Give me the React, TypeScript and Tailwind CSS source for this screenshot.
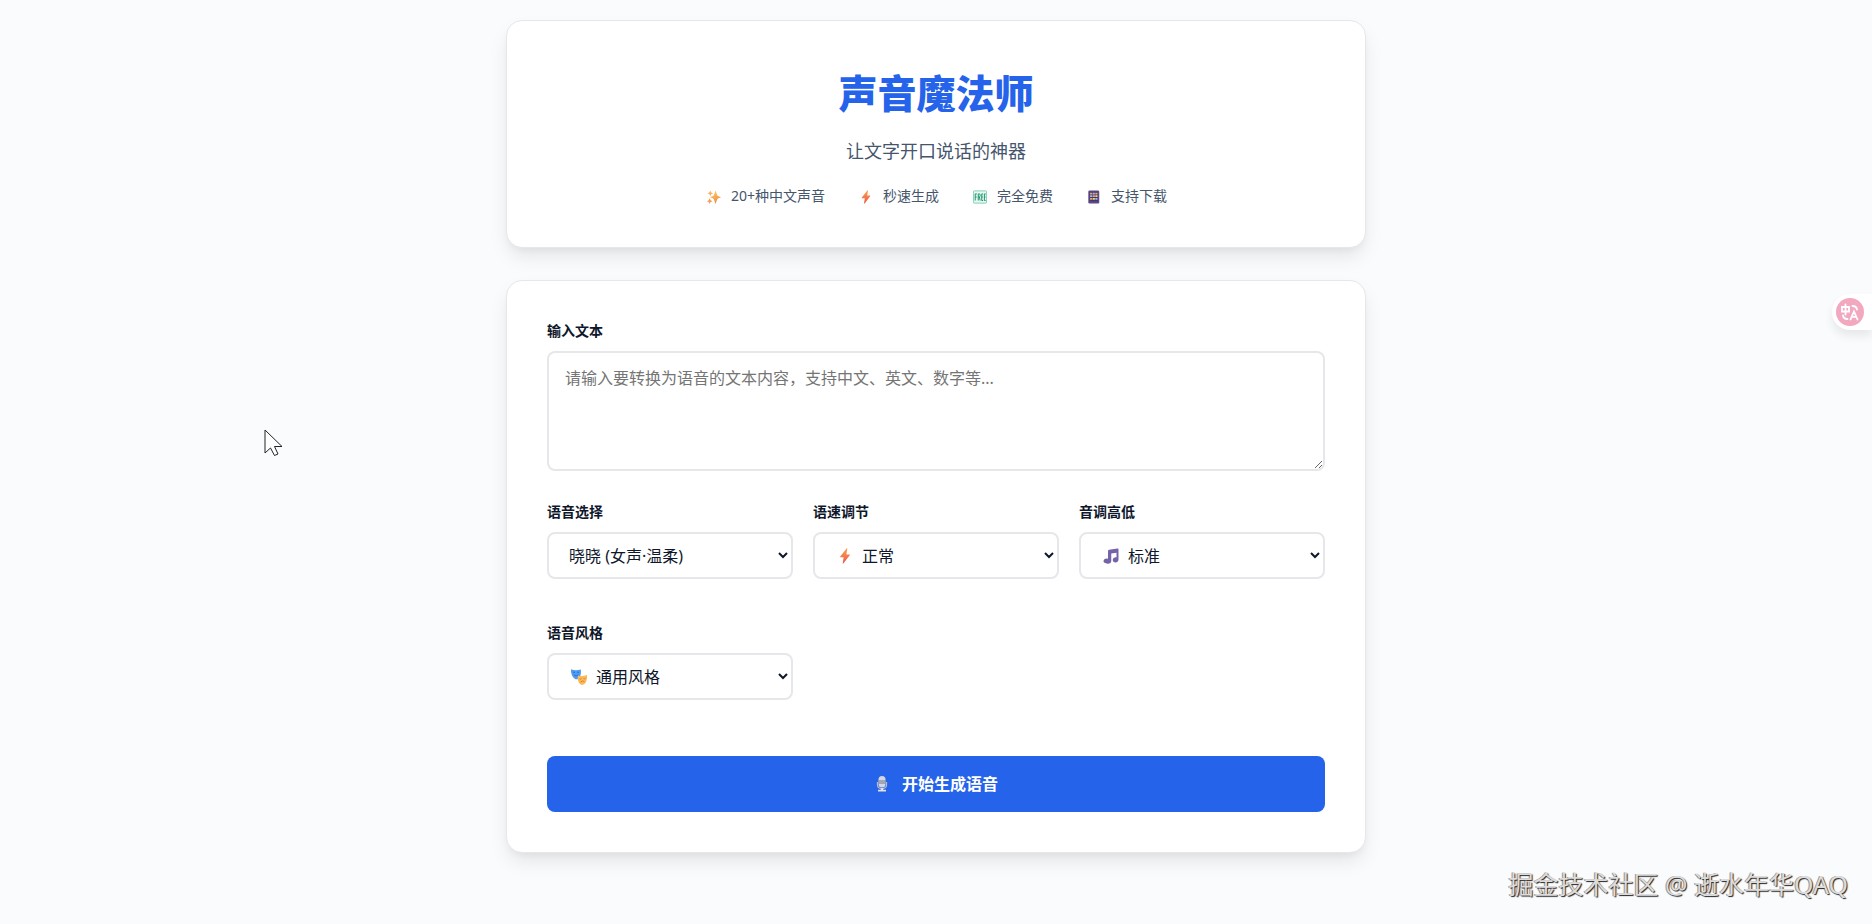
import { useState, type ReactNode } from 'react';
import clsx from 'clsx';

interface IconProps {
  className?: string;
}

function SparklesIcon({ className }: IconProps) {
  return (
    <svg viewBox="0 0 32 32" className={className} aria-hidden="true">
      <defs>
        <linearGradient id="sparkle" x1="0" y1="0" x2="0.3" y2="1">
          <stop offset="0" stopColor="#fbd765" />
          <stop offset="1" stopColor="#f08a45" />
        </linearGradient>
      </defs>
      <path
        fill="url(#sparkle)"
        d="M19.5 1 23 11Q23.6 13 25 13.6L32 16.500 25 19.400Q23.600 20 23 22L19.500 32 16 22Q15.400 20 14 19.400L7 16.500 14 13.600Q15.400 13 16 11Z"
      />
      <path fill="#f7b06a" d="M7.500 1 9.500 5.500l4.500 2L9.500 9.500 7.500 14 5.500 9.500 1 7.500 5.500 5.500Z" />
      <path fill="#f29a55" d="M6 18.500 8 23.500 13 25.500 8 27.500 6 32 4 27.500 0 25.500 4 23.500Z" />
    </svg>
  );
}

function BoltIcon({ className }: IconProps) {
  return (
    <svg viewBox="0 0 32 32" className={className} aria-hidden="true">
      <defs>
        <linearGradient id="bolt" x1="0" y1="0" x2="0" y2="1">
          <stop offset="0" stopColor="#fba24c" />
          <stop offset="1" stopColor="#ee5548" />
        </linearGradient>
      </defs>
      <path fill="url(#bolt)" d="M19 1 6.500 17c-.6.9-.2 1.700.8 1.700h6L11.500 30c-.2 1.200.8 1.500 1.500.6L25.500 14.500c.6-.9.200-1.700-.8-1.700h-6L20.500 1.800C20.700.4 19.700 0 19 1Z" />
    </svg>
  );
}

function FreeIcon({ className }: IconProps) {
  return (
    <svg viewBox="0 0 32 32" className={className} aria-hidden="true">
      <rect x="1" y="2" width="30" height="28" rx="1.500" fill="#e3f8ef" stroke="#7cc9ae" strokeWidth="2" />
      <path
        fill="none"
        stroke="#16936b"
        strokeWidth="2.200"
        d="M5 24V9h4M5 16h3.500M12 24V9h2.500q2 0 2 3.500t-2 3.500H12m2.500 0 2 8M23 9h-3v15h3M20 16h2.500M29 9h-3v15h3M26 16h2.500"
      />
    </svg>
  );
}

function PhoneIcon({ className }: IconProps) {
  return (
    <svg viewBox="0 0 32 32" className={className} aria-hidden="true">
      <rect x="3" y="1" width="25" height="30" rx="3" fill="#5d4a86" />
      <rect x="6" y="4" width="19" height="22" fill="#403a66" />
      <path fill="#f4a07a" d="M7 6h5v4H7zM19 6h5v4h-5zM13 12h5v4h-5zM7 18h5v4H7z" />
      <path fill="#9fb9f0" d="M13 6h5v4h-5zM7 12h5v4H7zM19 18h5v4h-5z" />
      <path fill="#f6cf83" d="M19 12h5v4h-5zM13 18h5v4h-5z" />
    </svg>
  );
}

function NotesIcon({ className }: IconProps) {
  return (
    <svg viewBox="0 0 32 32" className={className} aria-hidden="true">
      <path
        fill="#7562a8"
        d="M12 3.500 29 1q2-.2 2 1.800V23c0 3.500-2.800 6-6 6s-5.500-2-5.500-5 2.800-5.500 6-5.500l1.500.200V9.500l-10.500 1.700V26c0 3.300-3 5.500-6.200 5.500S1 29.500 1 26.500 3.800 21 7 21q1.500 0 3 .700V6q0-2.200 2-2.500Z"
      />
    </svg>
  );
}

function MasksIcon({ className }: IconProps) {
  return (
    <svg viewBox="0 0 32 32" className={className} aria-hidden="true">
      <path fill="#4f9cf3" d="M0 .5q9 3.500 19.500.3c1.500 8-1 18.200-7 19.700C6 21.500-1 12 0 .5Z" />
      <path fill="none" stroke="#1f62c4" strokeWidth="1.500" d="M4 7q2-2 4 0M12 7q2-2 4 0M6 12q4.500 4 8.500-.5" />
      <path fill="#fbb957" d="M14 13q8 2.500 18-1c1 9-2.500 19.500-9.500 19.800-6.500.2-10.500-10-8.500-18.800Z" />
      <path fill="none" stroke="#c9702b" strokeWidth="1.500" d="M17 19.500q2 1.500 4 0M25 19q2 1.500 4-.5M19 26q4-4 8-.5" />
    </svg>
  );
}

function MicIcon({ className }: IconProps) {
  return (
    <svg viewBox="0 0 32 32" className={className} aria-hidden="true">
      <path fill="none" stroke="#b9bccb" strokeWidth="2.500" d="M7 12v6q0 7 9 7t9-7v-6" />
      <rect x="9" y="0" width="14" height="23" rx="7" fill="#d5d6df" />
      <path fill="#77778c" d="M9 9h14v2H9zM9 13h14v2H9z" />
      <path fill="#e6e0e4" d="M13.500 24h5v3.500H24V31H8v-3.500h5.500z" />
    </svg>
  );
}

const features = [
  { label: '20+种中文声音', Icon: SparklesIcon },
  { label: '秒速生成', Icon: BoltIcon },
  { label: '完全免费', Icon: FreeIcon },
  { label: '支持下载', Icon: PhoneIcon },
];

const selects = [
  { id: 'voice', label: '语音选择', options: ['晓晓 (女声·温柔)'], Icon: null },
  { id: 'rate', label: '语速调节', options: ['正常'], Icon: BoltIcon },
  { id: 'pitch', label: '音调高低', options: ['标准'], Icon: NotesIcon },
  { id: 'style', label: '语音风格', options: ['通用风格'], Icon: MasksIcon },
];

function Card({ children }: { children: ReactNode }) {
  return (
    <section className="rounded-2xl border border-gray-200 bg-white p-10 shadow-[0_10px_20px_-3px_rgba(0,0,0,0.1),0_4px_6px_-2px_rgba(0,0,0,0.04)]">
      {children}
    </section>
  );
}

function Label({ htmlFor, children }: { htmlFor: string; children: ReactNode }) {
  return (
    <label htmlFor={htmlFor} className="mb-2.5 block text-sm leading-5 font-semibold">
      {children}
    </label>
  );
}

export default function App() {
  const [text, setText] = useState('');

  return (
    <div className="relative min-h-screen bg-[#fafbfd] font-['Noto_Sans','Noto_Sans_CJK_SC',sans-serif] text-slate-900">
      <main className="mx-auto flex max-w-[900px] flex-col gap-8 p-5">
        <Card>
          <header className="text-center">
            <h1 className="mb-3 text-[39px] leading-[64px] font-black text-[#2563eb]">声音魔法师</h1>
            <p className="mb-5 text-lg leading-7 text-slate-600">让文字开口说话的神器</p>
            <ul className="flex flex-wrap justify-center gap-8 text-sm leading-[22px] text-slate-600">
              {features.map(({ label, Icon }) => (
                <li key={label} className="flex items-center gap-2">
                  <span className="flex w-[18px] justify-center pt-0.5">
                    <Icon className="size-3.5" />
                  </span>
                  {label}
                </li>
              ))}
            </ul>
          </header>
        </Card>

        <Card>
          <form onSubmit={(e) => e.preventDefault()}>
            <Label htmlFor="text">输入文本</Label>
            <textarea
              id="text"
              value={text}
              onChange={(e) => setText(e.target.value)}
              placeholder="请输入要转换为语音的文本内容，支持中文、英文、数字等..."
              className="block h-[120px] w-full resize-y rounded-lg border-2 border-gray-200 px-4 py-3 text-base leading-[26px] outline-none placeholder:text-[#757575] focus:border-[#2563eb]"
            />

            <div className="mt-[31px] grid grid-cols-3 gap-x-5 gap-y-11">
              {selects.map(({ id, label, options, Icon }) => (
                <div key={id}>
                  <Label htmlFor={id}>{label}</Label>
                  <div className="relative">
                    <select
                      id={id}
                      className={clsx(
                        'block h-[47px] w-full rounded-lg border-2 border-gray-200 bg-white text-base outline-none focus:border-[#2563eb]',
                        Icon ? 'pl-[43px]' : 'pl-4'
                      )}
                    >
                      {options.map((option) => (
                        <option key={option}>{option}</option>
                      ))}
                    </select>
                    {Icon && <Icon className="pointer-events-none absolute top-1/2 left-6 size-4 -translate-y-1/2" />}
                  </div>
                </div>
              ))}
            </div>

            {/* Submit */}
            <button
              type="submit"
              className="mt-14 flex h-14 w-full items-center justify-center gap-3 rounded-lg bg-[#2563eb] text-base font-semibold text-white hover:bg-blue-700"
            >
              <MicIcon className="size-4" />
              开始生成语音
            </button>
          </form>
        </Card>
      </main>

      {/* Translate widget docked to the right edge */}
      <button
        type="button"
        aria-label="Translate"
        className="absolute top-[294px] right-0 rounded-l-full bg-white py-1 pr-2 pl-1 shadow-[0_6px_10px_rgba(0,0,0,0.08)]"
      >
        <svg viewBox="0 0 28 28" className="size-7" aria-hidden="true">
          <circle cx="14" cy="14" r="14" fill="#f2a9c0" />
          <g fill="none" stroke="#fff" strokeWidth="1.800" strokeLinecap="round">
            <path d="M6 9h7v4.500H6zM9.500 6.500v10" />
            <path d="M16.500 8q4 0 4.500 3.500M7 17.500q.5 3.500 4.500 3.500" />
            <path d="m14.500 21.500 3.500-8 3.500 8M15.800 18.800h4.500" />
          </g>
        </svg>
      </button>

      {/* Pointer */}
      <svg viewBox="0 0 19 28" className="absolute top-[429px] left-[264px] h-7 w-[19px]" aria-hidden="true">
        <path d="M1 1v23l5.500-5 4 7.500 3.500-1.500-3.500-7.500H18Z" fill="#fff" stroke="#222" strokeWidth="1" />
      </svg>

      <p className="absolute right-6 bottom-[22px] text-[25px] leading-9 text-[#dcdcdc] [text-shadow:1px_1px_1px_#222,-1px_0_0_#999]">
        掘金技术社区 @ 逝水年华QAQ
      </p>
    </div>
  );
}
